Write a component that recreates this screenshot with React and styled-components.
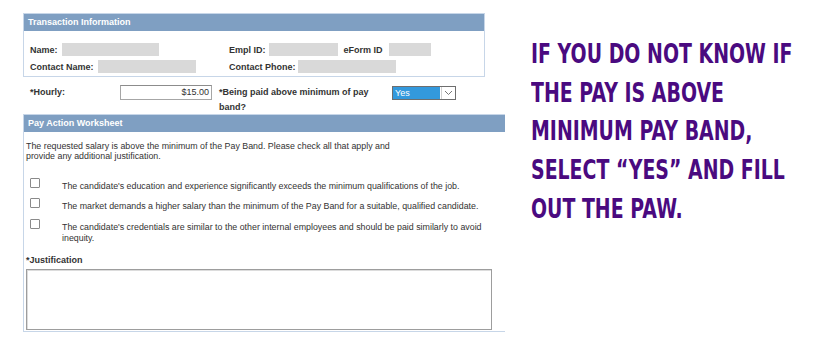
import React from 'react';
import styled, {createGlobalStyle} from 'styled-components';

const GlobalStyle = createGlobalStyle`
  html, body {
    margin: 0;
    padding: 0;
    background: #ffffff;
  }
  body {
    font-family: "Liberation Sans", Arial, sans-serif;
  }
`;

const Page = styled.div`
  display: flex;
  align-items: flex-start;
  width: 824px;
  height: 352px;
  padding: 13px 0 0 23px;
  box-sizing: border-box;
  overflow: hidden;
`;

const FormColumn = styled.div`
  display: flex;
  flex-direction: column;
  width: 482px;
  flex-shrink: 0;
  font-size: 9px;
  color: #333333;
`;

const InfoPanel = styled.section`
  width: 462px;
  border: 1px solid #c7d6e8;
  box-sizing: border-box;
`;

const PanelHeader = styled.div`
  height: 17px;
  line-height: 17px;
  padding-left: 4px;
  background: #7f9fc2;
  color: #ffffff;
  font-weight: bold;
  font-size: 9px;
`;

const InfoBody = styled.div`
  display: flex;
  flex-direction: column;
  gap: 4px;
  padding: 12px 0 3px 6px;
`;

const InfoRow = styled.div`
  display: flex;
  align-items: center;
  height: 13px;
`;

const FieldGroup = styled.div`
  display: flex;
  align-items: center;
  width: ${p => p.$width ? p.$width + 'px' : 'auto'};
`;

const Label = styled.span`
  font-weight: bold;
  color: #333333;
  margin-right: ${p => p.$gap || 4}px;
  white-space: nowrap;
`;

const Masked = styled.span`
  display: inline-block;
  width: ${p => p.$w}px;
  height: 13px;
  background: #d9d9d9;
  margin-right: ${p => p.$after || 0}px;
`;

const HourlyRow = styled.div`
  display: flex;
  align-items: flex-start;
  height: 29px;
  margin-top: 8px;
  padding-left: 7px;
`;

const HourlyLabel = styled.span`
  width: 90px;
  font-weight: bold;
  line-height: 15px;
`;

const AmountInput = styled.div`
  width: 92px;
  height: 15px;
  box-sizing: border-box;
  border: 1px solid #a6a6a6;
  border-top-color: #8c8c8c;
  text-align: right;
  padding-right: 2px;
  line-height: 13px;
  color: #333333;
`;

const QuestionLabel = styled.span`
  width: 160px;
  margin-left: 7px;
  font-weight: bold;
  line-height: 15px;
`;

const Select = styled.div`
  display: flex;
  width: 64px;
  height: 14px;
  margin-left: 13px;
  margin-top: 1px;
  box-sizing: border-box;
  border: 1px solid #6e6e6e;
  background: #ffffff;
`;

const SelectValue = styled.span`
  flex: 1;
  background: #3399dd;
  color: #ffffff;
  line-height: 12px;
  padding-left: 2px;
  margin: 0 1px 0 0;
`;

const SelectArrow = styled.span`
  display: flex;
  align-items: center;
  justify-content: center;
  width: 13px;
  border-left: 1px solid #d0d0d0;
`;

const WorksheetPanel = styled.section`
  width: 482px;
  border-left: 1px solid #c7d6e8;
  border-bottom: 1px solid #c7d6e8;
  border-top: 1px solid #c7d6e8;
  box-sizing: border-box;
  padding-bottom: 1px;
`;

const Intro = styled.p`
  margin: 9px 0 0 2px;
  width: 372px;
  line-height: 10px;
  font-size: 8.85px;
`;

const CheckList = styled.div`
  display: flex;
  flex-direction: column;
  margin-top: 17px;
`;

const CheckRow = styled.label`
  display: flex;
  align-items: flex-start;
  height: ${p => p.$h}px;
  padding-left: 6px;
`;

const CheckBox = styled.span`
  width: 10px;
  height: 10px;
  box-sizing: border-box;
  border: 1px solid #8a8a8a;
  border-radius: 1px;
  background: #ffffff;
  flex-shrink: 0;
`;

const CheckText = styled.span`
  margin-left: 22px;
  padding-top: 3px;
  width: 422px;
  line-height: 10.5px;
  font-size: 8.85px;
`;

const FieldTitle = styled.div`
  margin: 13px 0 0 2px;
  font-weight: bold;
  line-height: 10px;
`;

const TextBox = styled.div`
  width: 466px;
  height: 61px;
  margin: 4px 0 0 2px;
  box-sizing: border-box;
  border: 1px solid #9d9d9d;
  box-shadow: inset 1px 1px 0 #dcdcdc;
  background: #ffffff;
`;

const Callout = styled.div`
  margin: 22px 0 0 26px;
  font-family: "DejaVu Sans", sans-serif;
  font-weight: bold;
  font-size: 26px;
  line-height: 38.7px;
  color: #4a0a80;
  transform: scaleX(0.728);
  transform-origin: left top;
`;

const CalloutLine = styled.div`
  white-space: nowrap;
`;

const CHECKS = [
  {h: 20, text: "The candidate's education and experience significantly exceeds the minimum qualifications of the job."},
  {h: 21, text: 'The market demands a higher salary than the minimum of the Pay Band for a suitable, qualified candidate.'},
  {h: 23, text: "The candidate's credentials are similar to the other internal employees and should be paid similarly to avoid inequity."}
];

const CALLOUT = [
  'IF YOU DO NOT KNOW IF',
  'THE PAY IS ABOVE',
  'MINIMUM PAY BAND,',
  'SELECT \u201CYES\u201D AND FILL',
  'OUT THE PAW.'
];

export default function App() {
  return (
    <>
      <GlobalStyle/>
      <Page>
        <FormColumn>
          <InfoPanel>
            <PanelHeader>Transaction Information</PanelHeader>
            <InfoBody>
              <InfoRow>
                <FieldGroup $width={199}>
                  <Label>Name:</Label>
                  <Masked $w={97}/>
                </FieldGroup>
                <FieldGroup>
                  <Label $gap={3}>Empl ID:</Label>
                  <Masked $w={69} $after={6}/>
                  <Label $gap={6}>eForm ID</Label>
                  <Masked $w={42}/>
                </FieldGroup>
              </InfoRow>
              <InfoRow>
                <FieldGroup $width={199}>
                  <Label>Contact Name:</Label>
                  <Masked $w={98}/>
                </FieldGroup>
                <FieldGroup>
                  <Label $gap={2}>Contact Phone:</Label>
                  <Masked $w={98}/>
                </FieldGroup>
              </InfoRow>
            </InfoBody>
          </InfoPanel>

          <HourlyRow>
            <HourlyLabel>*Hourly:</HourlyLabel>
            <AmountInput>$15.00</AmountInput>
            <QuestionLabel>*Being paid above minimum of pay band?</QuestionLabel>
            <Select>
              <SelectValue>Yes</SelectValue>
              <SelectArrow>
                <svg width="9" height="6" viewBox="0 0 9 6">
                  <path d="M1 1 L4.5 4.5 L8 1" fill="none" stroke="#777" strokeWidth="1"/>
                </svg>
              </SelectArrow>
            </Select>
          </HourlyRow>

          <WorksheetPanel>
            <PanelHeader>Pay Action Worksheet</PanelHeader>
            <Intro>
              The requested salary is above the minimum of the Pay Band. Please check all that apply and provide any additional justification.
            </Intro>
            <CheckList>
              {CHECKS.map((c, i) => (
                <CheckRow key={i} $h={c.h}>
                  <CheckBox/>
                  <CheckText>{c.text}</CheckText>
                </CheckRow>
              ))}
            </CheckList>
            <FieldTitle>*Justification</FieldTitle>
            <TextBox/>
          </WorksheetPanel>
        </FormColumn>

        <Callout>
          {CALLOUT.map(line => <CalloutLine key={line}>{line}</CalloutLine>)}
        </Callout>
      </Page>
    </>
  );
}
